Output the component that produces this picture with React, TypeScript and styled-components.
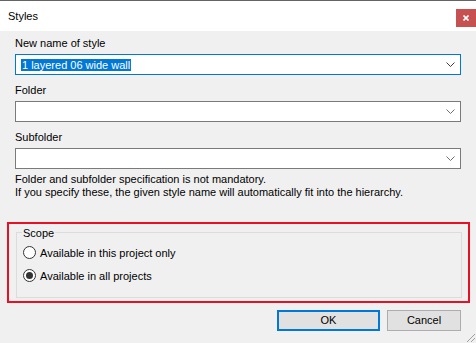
import React from 'react'
import styled, { createGlobalStyle } from 'styled-components'

const GlobalStyle = createGlobalStyle`
	html, body {
		margin: 0;
		padding: 0;
		background: #f0f0f0;
	}
	body {
		font-family: "Liberation Sans", Arial, sans-serif;
		font-size: 11px;
		color: #000;
	}
`

const Window = styled.div`
	position: relative;
	width: 476px;
	height: 343px;
	overflow: hidden;
	background: #f0f0f0;
	display: flex;
	flex-direction: column;
`

const TitleBar = styled.div`
	height: 30px;
	border-top: 1px solid #646464;
	background: #fff;
	display: flex;
	align-items: center;
	padding-left: 8px;
`

const Title = styled.span`
	font-size: 11px;
	line-height: 13px;
`

const CloseButton = styled.div`
	align-self: flex-start;
	margin-top: 8px;
	margin-left: auto;
	width: 20px;
	height: 18px;
	background: #c75050;
	display: flex;
	align-items: center;
	justify-content: center;
`

const Content = styled.div`
	padding: 6px 15px 0 15px;
	display: flex;
	flex-direction: column;
`

const Label = styled.div<{ $first?: boolean }>`
	line-height: 13px;
	margin-top: ${(p) => (p.$first ? 0 : 9)}px;
	margin-bottom: 4px;
`

const Combo = styled.div<{ $focused?: boolean }>`
	box-sizing: border-box;
	height: 21px;
	background: #fff;
	border: 1px solid ${(p) => (p.$focused ? '#0078d7' : '#7a7a7a')};
	display: flex;
	align-items: center;
	padding: 0 5px 0 5px;
`

const ComboValue = styled.span`
	flex: 1;
	line-height: 14px;
`

const Selected = styled.span`
	background: #0078d7;
	color: #fff;
	padding: 0 1px;
`

const Note = styled.div`
	margin-top: 4px;
	line-height: 13px;
`

const Highlight = styled.div`
	margin: 23px -9px 0 -8px;
	border: 2px solid #e81123;
	padding: 8px 6px 3px 7px;
`

const Group = styled.div`
	position: relative;
	box-sizing: border-box;
	height: 66px;
	border: 1px solid #dcdcdc;
	padding: 8px 6px;
`

const Legend = styled.span`
	position: absolute;
	top: -6px;
	left: 5px;
	padding: 0 1px;
	line-height: 13px;
	background: #f0f0f0;
`

const RadioRow = styled.label`
	height: 23px;
	display: flex;
	align-items: center;
	gap: 4px;
`

const RadioCircle = styled.span<{ $checked?: boolean }>`
	box-sizing: border-box;
	width: 13px;
	height: 13px;
	border-radius: 50%;
	border: 1px solid #333;
	background: #fff;
	display: flex;
	align-items: center;
	justify-content: center;
	&::after {
		content: '';
		display: ${(p) => (p.$checked ? 'block' : 'none')};
		width: 7px;
		height: 7px;
		border-radius: 50%;
		background: #333;
	}
`

const ButtonRow = styled.div`
	margin-top: 7px;
	display: flex;
	justify-content: flex-end;
	gap: 7px;
`

const Button = styled.div<{ $default?: boolean; $width: number }>`
	box-sizing: border-box;
	width: ${(p) => p.$width}px;
	height: 21px;
	background: #e1e1e1;
	border: ${(p) => (p.$default ? '2px solid #0078d7' : '1px solid #adadad')};
	display: flex;
	align-items: center;
	justify-content: center;
	line-height: 13px;
`

const Grip = styled.svg`
	position: absolute;
	right: 0;
	bottom: 0;
`

const Chevron = ({ dark }: { dark?: boolean }) => (
	<svg width="9" height="5" viewBox="0 0 9 5">
		<polyline
			points="0.5,0.5 4.5,4.5 8.5,0.5"
			fill="none"
			stroke={dark ? '#404040' : '#707070'}
			strokeWidth="1"
		/>
	</svg>
)

const fields = [
	{ label: 'New name of style', value: '1 layered 06 wide wall', focused: true },
	{ label: 'Folder', value: '', focused: false },
	{ label: 'Subfolder', value: '', focused: false },
]

export default function App() {
	return (
		<Window>
			<GlobalStyle />
			<TitleBar>
				<Title>Styles</Title>
				<CloseButton>
					<svg width="6" height="6" viewBox="0 0 6 6">
						<path d="M0.5 0.5 L5.5 5.5 M5.5 0.5 L0.5 5.5" stroke="#fff" strokeWidth="1.6" />
					</svg>
				</CloseButton>
			</TitleBar>
			<Content>
				{fields.map((f, i) => (
					<React.Fragment key={f.label}>
						<Label $first={i === 0}>{f.label}</Label>
						<Combo $focused={f.focused}>
							<ComboValue>{f.value && <Selected>{f.value}</Selected>}</ComboValue>
							<Chevron dark={f.focused} />
						</Combo>
					</React.Fragment>
				))}
				<Note>
					Folder and subfolder specification is not mandatory.
					<br />
					If you specify these, the given style name will automatically fit into the hierarchy.
				</Note>
				<Highlight>
					<Group>
						<Legend>Scope</Legend>
						<RadioRow>
							<RadioCircle />
							Available in this project only
						</RadioRow>
						<RadioRow>
							<RadioCircle $checked />
							Available in all projects
						</RadioRow>
					</Group>
				</Highlight>
				<ButtonRow>
					<Button $default $width={103}>OK</Button>
					<Button $width={74}>Cancel</Button>
				</ButtonRow>
			</Content>
			<Grip width="12" height="12" viewBox="0 0 12 12">
				<path d="M11 3 L3 11 M11 7 L7 11 M11 11 L11 11" stroke="#a0a0a0" strokeWidth="1" />
			</Grip>
		</Window>
	)
}
